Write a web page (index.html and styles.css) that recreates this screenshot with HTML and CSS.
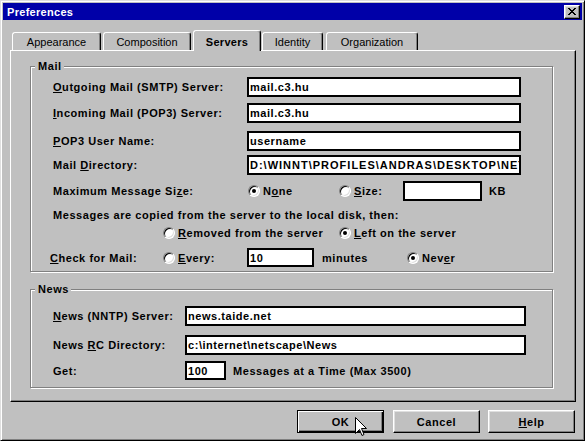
FILE: index.html
```html
<!DOCTYPE html>
<html lang="en">
<head>
<meta charset="utf-8">
<title>Preferences</title>
<link rel="stylesheet" href="styles.css">
</head>
<body>
<div class="window">
  <div class="titlebar">
    <span class="title">Preferences</span>
    <button class="close" type="button" aria-label="Close">
      <svg width="8" height="7" viewBox="0 0 8 7" shape-rendering="crispEdges">
        <rect x="0" y="0" width="2" height="1"/><rect x="6" y="0" width="2" height="1"/>
        <rect x="1" y="1" width="2" height="1"/><rect x="5" y="1" width="2" height="1"/>
        <rect x="2" y="2" width="4" height="1"/>
        <rect x="3" y="3" width="2" height="1"/>
        <rect x="2" y="4" width="4" height="1"/>
        <rect x="1" y="5" width="2" height="1"/><rect x="5" y="5" width="2" height="1"/>
        <rect x="0" y="6" width="2" height="1"/><rect x="6" y="6" width="2" height="1"/>
      </svg>
    </button>
  </div>
  <div class="dialog">
    <div class="tabs">
      <div class="tab tab-app">Appearance</div>
      <div class="tab tab-comp">Composition</div>
      <div class="tab tab-serv">Servers</div>
      <div class="tab tab-ident">Identity</div>
      <div class="tab tab-org">Organization</div>
    </div>
    <div class="panel">
      <div class="group mail">
        <span class="legend">Mail</span>
        <div class="row m1">
          <span class="lbl"><u>O</u>utgoing Mail (SMTP) Server:</span>
          <input class="field f-wide" value="mail.c3.hu" readonly>
        </div>
        <div class="row m2">
          <span class="lbl"><u>I</u>ncoming Mail (POP3) Server:</span>
          <input class="field f-wide" value="mail.c3.hu" readonly>
        </div>
        <div class="row m3">
          <span class="lbl"><u>P</u>OP3 User Name:</span>
          <input class="field f-wide" value="username" readonly>
        </div>
        <div class="row m4">
          <span class="lbl">Mail <u>D</u>irectory:</span>
          <input class="field f-wide f-dir" value="D:\WINNT\PROFILES\ANDRAS\DESKTOP\NETSCAPE\MAIL" readonly>
        </div>
        <div class="row m5">
          <span class="lbl">Maximum Message Si<u>z</u>e:</span>
          <span class="opt o-none"><span class="radio on"></span><span>N<u>o</u>ne</span></span>
          <span class="opt o-size"><span class="radio"></span><span><u>S</u>ize:</span></span>
          <input class="field f-size" value="" readonly>
          <span class="kb">KB</span>
        </div>
        <div class="row-text m6">Messages are copied from the server to the local disk, then:</div>
        <div class="row m7">
          <span class="opt o-removed"><span class="radio"></span><span><u>R</u>emoved from the server</span></span>
          <span class="opt"><span class="radio on"></span><span><u>L</u>eft on the server</span></span>
        </div>
        <div class="row m8">
          <span class="lbl lbl-check"><u>C</u>heck for Mail:</span>
          <span class="opt o-every"><span class="radio"></span><span><u>E</u>very:</span></span>
          <input class="field f-min" value="10" readonly>
          <span class="minutes">minutes</span>
          <span class="opt"><span class="radio on"></span><span>Nev<u>e</u>r</span></span>
        </div>
      </div>
      <div class="group news">
        <span class="legend">News</span>
        <div class="row n1">
          <span class="lbl lbl-news"><u>N</u>ews (NNTP) Server:</span>
          <input class="field f-news" value="news.taide.net" readonly>
        </div>
        <div class="row n2">
          <span class="lbl lbl-news">News <u>R</u>C Directory:</span>
          <input class="field f-news" value="c:\internet\netscape\News" readonly>
        </div>
        <div class="row n3">
          <span class="lbl lbl-news">Get:</span>
          <input class="field f-get" value="100" readonly>
          <span class="get-text">Messages at a Time (Max 3500)</span>
        </div>
      </div>
    </div>
    <div class="buttons">
      <button class="btn btn-default" type="button">OK</button>
      <button class="btn btn-cancel" type="button">Cancel</button>
      <button class="btn btn-help" type="button"><u>H</u>elp</button>
    </div>
  </div>
  <svg class="cursor" width="12" height="20" viewBox="0 0 12 20">
    <path d="M0.5 0.5 L0.5 16.5 L4.5 12.5 L7 18.5 L9 17.5 L6.5 11.5 L11.5 11.5 Z" fill="#fff" stroke="#000" stroke-width="1" stroke-linejoin="miter"/>
  </svg>
</div>
</body>
</html>
```

FILE: styles.css
```css
* { box-sizing: border-box; }

html, body {
  margin: 0;
  padding: 0;
  background: #c0c0c0;
}

body {
  font: bold 11px "Liberation Sans", Arial, sans-serif;
  letter-spacing: 0.55px;
  color: #000;
}

u { text-decoration: underline; text-underline-offset: 1px; }

.window {
  position: relative;
  width: 585px;
  height: 441px;
  border: 1px solid;
  border-color: #dfdfdf #000 #000 #dfdfdf;
  box-shadow: inset 1px 1px #fff, inset -1px -1px #808080;
  padding: 2px;
  background: #c0c0c0;
}

.titlebar {
  height: 17px;
  background: #0000a8;
  color: #fff;
  display: flex;
  align-items: center;
  justify-content: space-between;
  padding: 0 2px 0 4px;
}

.title { letter-spacing: 0.3px; }

.close {
  width: 16px;
  height: 14px;
  padding: 0;
  border: 1px solid;
  border-color: #fff #000 #000 #fff;
  box-shadow: inset -1px -1px #808080, inset 1px 1px #dfdfdf;
  background: #c0c0c0;
  display: flex;
  align-items: center;
  justify-content: center;
}

.dialog { padding: 10px 6px 0 7px; }

.tabs {
  display: flex;
  align-items: flex-end;
  height: 20px;
}

.tab {
  flex: none;
  height: 18px;
  border: 1px solid;
  border-bottom: 0;
  border-color: #fff #000 transparent #fff;
  border-radius: 3px 3px 0 0;
  box-shadow: inset -1px 0 #808080;
  background: #c0c0c0;
  font-weight: normal;
  letter-spacing: 0;
  text-align: center;
  line-height: 13px;
  padding-top: 3px;
}

.tab-app { margin-left: 2px; width: 89px; }
.tab-comp { margin-left: 2px; width: 88px; }
.tab-serv {
  margin-left: 2px;
  width: 68px;
  height: 21px;
  margin-bottom: -1px;
  padding-top: 5px;
  position: relative;
  z-index: 1;
  font-weight: bold;
  letter-spacing: 0.3px;
}
.tab-ident { margin-left: 1px; width: 61px; }
.tab-org { margin-left: 3px; width: 92px; }

.panel {
  height: 352px;
  border: 1px solid;
  border-color: #fff #000 #000 #fff;
  box-shadow: inset -1px -1px #808080;
  padding: 15px 0 0 19px;
}

.group {
  width: 523px;
  border: 1px solid #808080;
  box-shadow: 1px 1px 0 #fff, inset 1px 1px 0 #fff;
  padding: 0 0 0 22px;
}

.mail { height: 206px; }
.news { height: 99px; margin-top: 17px; }

.legend {
  display: block;
  width: fit-content;
  margin: -7px 0 0 -18px;
  padding: 0 2px 0 3px;
  background: #c0c0c0;
  line-height: 13px;
}

.row {
  display: flex;
  align-items: center;
  height: 20px;
  white-space: nowrap;
}

.row-text { height: 13px; line-height: 13px; white-space: nowrap; }

.lbl { width: 194px; flex: none; }
.lbl-check { margin-left: -3px; width: 113px; }
.lbl-news { width: 132px; }

.field {
  flex: none;
  height: 20px;
  margin: 0;
  padding: 0 0 0 1px;
  border: 2px solid #000;
  border-radius: 0;
  background: #fff;
  color: #000;
  font: inherit;
  letter-spacing: inherit;
  outline: none;
}

.f-wide { width: 274px; }
.f-dir { letter-spacing: 1px; }
.f-size { width: 79px; }
.f-min { width: 67px; height: 19px; }
.f-news { width: 341px; }
.f-get { width: 41px; height: 19px; }

.opt { display: flex; align-items: center; flex: none; }
.opt .radio { margin-right: 3px; }

.radio {
  position: relative;
  flex: none;
  width: 12px;
  height: 12px;
  border-radius: 50%;
  background: #fff;
  border: 1px solid;
  border-color: #808080 #fff #fff #808080;
  box-shadow: inset 1px 1px #000, inset -1px -1px #dfdfdf;
}

.radio.on::after {
  content: "";
  position: absolute;
  left: 3px;
  top: 3px;
  width: 4px;
  height: 4px;
  border-radius: 50%;
  background: #000;
}

.o-none { margin-left: 1px; width: 91px; }
.o-size { width: 64px; }
.kb { margin-left: 7px; }

.m1 { margin-top: 4px; }
.m2 { margin-top: 6px; }
.m3 { margin-top: 8px; }
.m4 { margin-top: 4px; }
.m5 { margin-top: 6px; }
.m6 { margin-top: 8px; }
.m7 { margin-top: 3px; height: 15px; }
.m8 { margin-top: 8px; height: 19px; }

.o-removed { margin-left: 110px; width: 176px; }
.o-every { width: 84px; }
.minutes { margin-left: 8px; width: 85px; flex: none; }

.n1 { margin-top: 10px; }
.n2 { margin-top: 9px; }
.n3 { margin-top: 6px; height: 19px; }

.get-text { margin-left: 7px; }

.buttons {
  display: flex;
  justify-content: flex-end;
  margin-top: 8px;
  padding-right: 1px;
}

.btn {
  flex: none;
  width: 87px;
  height: 23px;
  padding: 0;
  margin: 0;
  background: #c0c0c0;
  color: #000;
  font: inherit;
  letter-spacing: inherit;
  border: 1px solid;
  border-color: #fff #000 #000 #fff;
  box-shadow: inset -1px -1px #808080, inset 1px 1px #dfdfdf;
}

.btn-default {
  border: 1px solid #000;
  box-shadow: inset 1px 1px #fff, inset -1px -1px #000, inset -2px -2px #808080;
}

.btn-cancel { margin-left: 9px; }
.btn-help { margin-left: 8px; }

.cursor {
  position: absolute;
  left: 354px;
  top: 416px;
}
```
